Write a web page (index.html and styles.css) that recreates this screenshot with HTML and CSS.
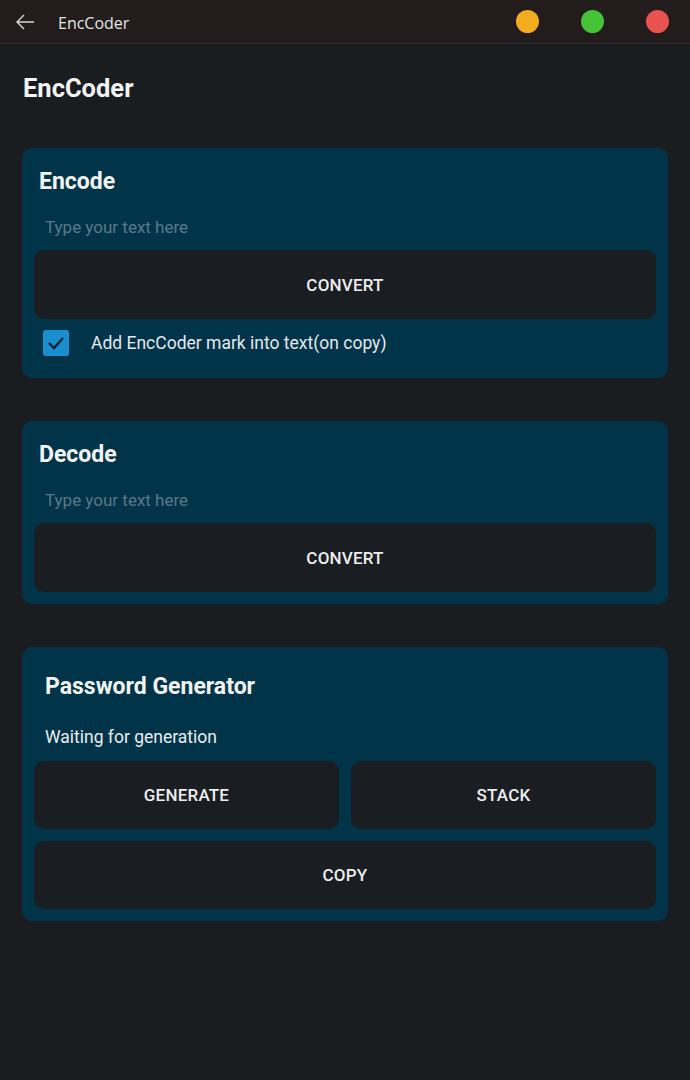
FILE: index.html
```html
<!DOCTYPE html>
<html lang="en">
<head>
    <meta charset="UTF-8">
    <meta name="viewport" content="width=device-width, initial-scale=1.0">
    <title>EncCoder</title>
    <link rel="stylesheet" href="styles.css">
</head>
<body>

    <!-- Window title bar -->
    <div class="titlebar">
        <svg class="back" width="20" height="16" viewBox="0 0 20 16">
            <path d="M9 1 L2 8 L9 15 M2 8 H19" fill="none" stroke="#d8d8d8" stroke-width="1.4"/>
        </svg>
        <span class="app-name">EncCoder</span>
        <div class="dots">
            <span class="dot orange"></span>
            <span class="dot green"></span>
            <span class="dot red"></span>
        </div>
    </div>

    <div class="main">
        <h1>EncCoder</h1>

        <!-- Encode -->
        <div class="card">
            <h2>Encode</h2>
            <input class="field" type="text" placeholder="Type your text here">
            <button class="btn">CONVERT</button>
            <label class="check-row">
                <span class="checkbox">
                    <svg width="18" height="14" viewBox="0 0 18 14">
                        <path d="M2 7 L7 12 L16 2" fill="none" stroke="#0d2431" stroke-width="2.4"/>
                    </svg>
                </span>
                Add EncCoder mark into text(on copy)
            </label>
        </div>

        <!-- Decode -->
        <div class="card">
            <h2>Decode</h2>
            <input class="field" type="text" placeholder="Type your text here">
            <button class="btn">CONVERT</button>
        </div>

        <!-- Password Generator -->
        <div class="card">
            <h2 class="wide">Password Generator</h2>
            <p class="status">Waiting for generation</p>
            <div class="btn-grid">
                <button class="btn">GENERATE</button>
                <button class="btn">STACK</button>
                <button class="btn full">COPY</button>
            </div>
        </div>
    </div>

</body>
</html>
```

FILE: styles.css
```css
body {
    margin: 0;
    background-color: #1a1d20;
    font-family: Roboto, "Liberation Sans", sans-serif;
    color: #f2f4f5;
}
.titlebar {
    height: 44px;
    background-color: #221c1d;
    display: flex;
    align-items: center;
    padding-left: 15px;
    border-bottom: 1px solid #2a2a2c;
    box-sizing: border-box;
}
.back {
    margin-right: 23px;
}
.app-name {
    font-family: "Open Sans", "Noto Sans", sans-serif;
    font-size: 16px;
    color: #e4e4e4;
    padding-top: 2px;
}
.dots {
    margin-left: auto;
    display: flex;
    gap: 42px;
    padding-right: 21px;
}
.dot {
    width: 23px;
    height: 23px;
    border-radius: 50%;
}
.orange { background-color: #f2ac1f; }
.green { background-color: #45c236; }
.red { background-color: #e8534f; }

.main {
    padding: 28px 22px 0;
}
h1 {
    margin: 0 0 44px 1px;
    font-size: 25.5px;
    line-height: 32px;
    font-weight: 700;
}
.card {
    background-color: #023449;
    border-radius: 10px;
    padding: 0 12px 12px;
    margin-bottom: 43px;
}
.card h2 {
    margin: 0;
    padding: 19px 5px 0;
    font-size: 23px;
    line-height: 30px;
    font-weight: 700;
}
.card h2.wide {
    padding: 25px 11px 0;
}
.field {
    display: block;
    width: 100%;
    box-sizing: border-box;
    height: 24px;
    margin: 18px 0 11px;
    padding: 0 11px;
    background: transparent;
    border: none;
    outline: none;
    font-family: inherit;
    font-size: 17px;
    color: #f2f4f5;
}
.field::placeholder {
    color: #5a7887;
}
.btn {
    display: block;
    width: 100%;
    height: 69px;
    border: none;
    border-radius: 10px;
    background-color: #1a1d21;
    color: #eceeef;
    font-family: inherit;
    font-size: 17px;
    font-weight: 500;
    letter-spacing: 0.2px;
    cursor: pointer;
}
.check-row {
    display: flex;
    align-items: center;
    margin: 11px 0 0 9px;
    padding-bottom: 10px;
    font-size: 17.5px;
    color: #e3e9ec;
}
.checkbox {
    width: 26px;
    height: 26px;
    border-radius: 3px;
    background-color: #1a8fcf;
    display: flex;
    align-items: center;
    justify-content: center;
    margin-right: 22px;
}
.status {
    margin: 23px 0 12px;
    padding-left: 11px;
    font-size: 17.5px;
    line-height: 24px;
    color: #e8edf0;
}
.btn-grid {
    display: grid;
    grid-template-columns: 1fr 1fr;
    gap: 12px;
}
.btn-grid .btn {
    height: 68px;
}
.btn-grid .full {
    grid-column: 1 / 3;
}
```
